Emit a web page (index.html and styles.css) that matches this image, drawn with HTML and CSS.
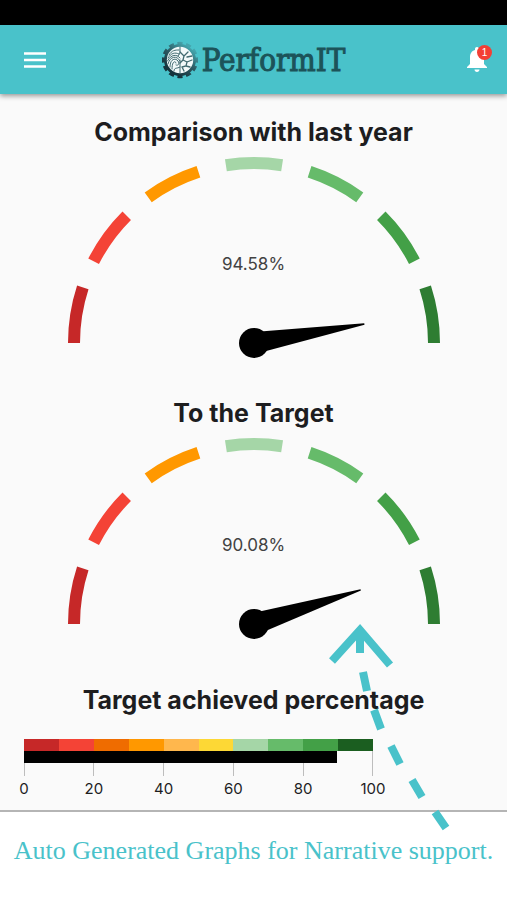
FILE: index.html
```html
<!DOCTYPE html>
<html lang="en">
<head>
<meta charset="utf-8">
<meta name="viewport" content="width=device-width, initial-scale=1">
<title>PerformIT</title>
<link rel="stylesheet" href="styles.css">
</head>
<body>
<div class="status-bar"></div>
<header class="app-bar">
  <button class="icon-button" type="button" aria-label="Menu">
    <svg class="menu-icon" viewBox="0 0 22 16" aria-hidden="true"><path d="M0 1.5H22M0 8H22M0 14.5H22"/></svg>
  </button>
  <div class="brand">
    <svg class="brand-mark" viewBox="0 0 36 38" aria-hidden="true">
      <defs>
        <linearGradient id="gear" gradientUnits="userSpaceOnUse" x1="10" y1="30" x2="27" y2="6">
          <stop offset="0" stop-color="#15343d"/>
          <stop offset="0.5" stop-color="#2c5a63"/>
          <stop offset="1" stop-color="#44a5ad"/>
        </linearGradient>
      </defs>
      <circle cx="18" cy="19" r="16" fill="url(#gear)"/>
      <circle cx="18" cy="19" r="16.500" fill="none" stroke="url(#gear)" stroke-width="3.600" pathLength="120" stroke-dasharray="6 4" stroke-dashoffset="3"/>
      <circle cx="18" cy="19" r="13.200" fill="#f3fafa"/>
      <g fill="none" stroke="#416a70" stroke-width="1" stroke-linecap="round">
        <path d="M18 6V12L16 15M18 19V32"/>
        <path d="M7 14C10 9 13 9 17 9M6 17C9 12 13 11 17 13M5.500 20C9 13 15 13 18 17M6 23C8 15 15 14 18 20M8 26C8 17 14 17 16 20C18 23 16 25 14 24M10 28C10 19 14 20 14 22M12 30C12 26 15 28 18 26"/>
        <path d="M18 11L22 15L21 19L25 21M22 15L26 11M25 16L30 15M21 19L18 22M25 21L30 19M25 21L24 25L20 26M24 25L28 26M20 26L22 30" stroke-width="1.300"/>
      </g>
    </svg>
    <span class="brand-name">PerformIT</span>
  </div>
  <button class="icon-button bell" type="button" aria-label="Notifications">
    <svg class="bell-icon" viewBox="0 0 20 25" aria-hidden="true"><path fill="#fff" d="M10 0C11.200 0 12 .8 12 2V3C15.500 4 17 7 17 10V17L20 20V21H0V20L3 17V10C3 7 4.500 4 8 3V2C8 .8 8.800 0 10 0ZM7.500 22.500H12.500C12.500 24 11.400 25 10 25S7.500 24 7.500 22.500Z"/></svg>
    <span class="badge">1</span>
  </button>
</header>
<main class="dashboard">
  <section class="gauge-card">
    <h2 class="title">Comparison with last year</h2>
    <div class="gauge">
      <svg viewBox="0 0 374 202" aria-hidden="true">
        <g class="scale">
          <path class="s1" pathLength="180" d="M7 187A180 180 0 0 1 367 187"/>
          <path class="s2" pathLength="180" d="M7 187A180 180 0 0 1 367 187"/>
          <path class="s3" pathLength="180" d="M7 187A180 180 0 0 1 367 187"/>
          <path class="s4" pathLength="180" d="M7 187A180 180 0 0 1 367 187"/>
          <path class="s5" pathLength="180" d="M7 187A180 180 0 0 1 367 187"/>
          <path class="s6" pathLength="180" d="M7 187A180 180 0 0 1 367 187"/>
          <path class="s7" pathLength="180" d="M7 187A180 180 0 0 1 367 187"/>
        </g>
        <circle cx="187" cy="187" r="15"/>
        <path d="M187 176L299 186.300V187.700L187 198Z" transform="rotate(-9.75 187 187)"/>
      </svg>
      <span class="reading">94.58%</span>
    </div>
  </section>
  <section class="gauge-card">
    <h2 class="title">To the Target</h2>
    <div class="gauge">
      <svg viewBox="0 0 374 202" aria-hidden="true">
        <g class="scale">
          <path class="s1" pathLength="180" d="M7 187A180 180 0 0 1 367 187"/>
          <path class="s2" pathLength="180" d="M7 187A180 180 0 0 1 367 187"/>
          <path class="s3" pathLength="180" d="M7 187A180 180 0 0 1 367 187"/>
          <path class="s4" pathLength="180" d="M7 187A180 180 0 0 1 367 187"/>
          <path class="s5" pathLength="180" d="M7 187A180 180 0 0 1 367 187"/>
          <path class="s6" pathLength="180" d="M7 187A180 180 0 0 1 367 187"/>
          <path class="s7" pathLength="180" d="M7 187A180 180 0 0 1 367 187"/>
        </g>
        <circle cx="187" cy="187" r="15"/>
        <path d="M187 176L299 186.300V187.700L187 198Z" transform="rotate(-17.7 187 187)"/>
      </svg>
      <span class="reading">90.08%</span>
    </div>
  </section>
  <section class="target-card">
    <h2 class="title">Target achieved percentage</h2>
    <div class="bullet">
      <div class="bands"><i></i><i></i><i></i><i></i><i></i><i></i><i></i><i></i><i></i><i></i></div>
      <div class="progress"><div class="progress-fill" style="width: 90.08%"></div></div>
      <ol class="axis"><li>0</li><li>20</li><li>40</li><li>60</li><li>80</li><li>100</li></ol>
    </div>
    <svg class="arrow" viewBox="0 0 70 210" aria-hidden="true">
      <path d="M4 41L32 10L62 45M32 10V33M35 52L39 71M46 90L53 109M63 126L72 144M84 160L94 177M107 192L118 208"/>
    </svg>
  </section>
</main>
<footer class="caption">Auto Generated Graphs for Narrative support.</footer>
</body>
</html>
```

FILE: styles.css
```css
* { box-sizing: border-box; }

body {
  margin: 0;
  background: #fff;
  color: #1d1d1f;
  font-family: Inter, sans-serif;
}

.status-bar { height: 25px; background: #000; }

.app-bar {
  display: grid;
  grid-template-columns: 1fr auto 1fr;
  align-items: center;
  height: 69px;
  padding: 0 12px;
  background: #49c2ca;
  box-shadow: 0 2px 5px rgba(0, 0, 0, 0.4);
  position: relative;
  z-index: 1;
}

.icon-button {
  display: grid;
  place-items: center;
  width: 46px;
  height: 46px;
  padding: 0;
  border: 0;
  background: none;
}

.menu-icon { width: 22px; height: 16px; }
.menu-icon path { stroke: #fff; stroke-width: 2.5; }

.bell { position: relative; justify-self: end; width: 36px; }
.bell-icon { width: 20px; height: 25px; }

.badge {
  position: absolute;
  top: 8px;
  right: 3px;
  width: 15px;
  height: 15px;
  border-radius: 50%;
  background: #f33f35;
  color: #fff;
  font-size: 10px;
  line-height: 15px;
  text-align: center;
}

.brand { display: flex; align-items: center; gap: 4px; }
.brand-mark { width: 36px; height: 38px; }

.brand-name {
  color: #1c5359;
  font-family: "DejaVu Serif Condensed", "DejaVu Serif", serif;
  font-size: 31px;
  line-height: 36px;
  -webkit-text-stroke: 1px #1c5359;
}

.dashboard {
  padding-top: 20px;
  border-bottom: 2px solid #b5b5b5;
  background: #fafafa;
}

.title {
  margin: 0;
  font-size: 25px;
  font-weight: 650;
  line-height: 36px;
  text-align: center;
}

.gauge-card { padding: 0 0 37px; }

.gauge {
  position: relative;
  max-width: 374px;
  margin: 6px auto 0;
}

.gauge svg { display: block; width: 100%; }

.scale path {
  fill: none;
  stroke-width: 12;
  stroke-dasharray: 18 400;
}

.s1 { stroke: #c62828; }
.s2 { stroke: #f44336; stroke-dashoffset: -27; }
.s3 { stroke: #ff9800; stroke-dashoffset: -54; }
.s4 { stroke: #a5d6a7; stroke-dashoffset: -81; }
.s5 { stroke: #66bb6a; stroke-dashoffset: -108; }
.s6 { stroke: #43a047; stroke-dashoffset: -135; }
.s7 { stroke: #2e7d32; stroke-dashoffset: -162; }

.reading {
  position: absolute;
  top: 98px;
  left: 0;
  right: 0;
  color: #424242;
  font-size: 17px;
  line-height: 20px;
  text-align: center;
}

.target-card { position: relative; padding: 6px 0 12px; }

.bullet { margin: 21px 134px 0 24px; }

.bands { display: grid; grid-template-columns: repeat(10, 1fr); height: 12px; }
.bands i:nth-child(1) { background: #c62828; }
.bands i:nth-child(2) { background: #f44336; }
.bands i:nth-child(3) { background: #ef6c00; }
.bands i:nth-child(4) { background: #ff9800; }
.bands i:nth-child(5) { background: #ffb74d; }
.bands i:nth-child(6) { background: #fdd835; }
.bands i:nth-child(7) { background: #a5d6a7; }
.bands i:nth-child(8) { background: #66bb6a; }
.bands i:nth-child(9) { background: #43a047; }
.bands i:nth-child(10) { background: #1b5e20; }

.progress { height: 12px; border-right: 1px solid #bdbdbd; }
.progress-fill { height: 100%; background: #000; }

.axis {
  display: flex;
  justify-content: space-between;
  margin: 0 -20px;
  padding: 0;
  list-style: none;
  font-size: 15px;
  line-height: 18px;
}

.axis li { width: 40px; text-align: center; }

.axis li::before {
  content: "";
  display: block;
  width: 1px;
  height: 13px;
  margin: 0 auto 4px;
  background: #bdbdbd;
}

.arrow {
  position: absolute;
  top: -56px;
  left: calc(50% + 74px);
  width: 70px;
  height: 210px;
  overflow: visible;
  z-index: 1;
}

.arrow path { fill: none; stroke: #49c2ca; stroke-width: 8; }

.caption {
  padding: 24px 8px;
  color: #49c2ca;
  font-family: "Palatino Linotype", Palatino, "Liberation Serif", serif;
  font-size: 26px;
  line-height: 30px;
  text-align: center;
}
```
